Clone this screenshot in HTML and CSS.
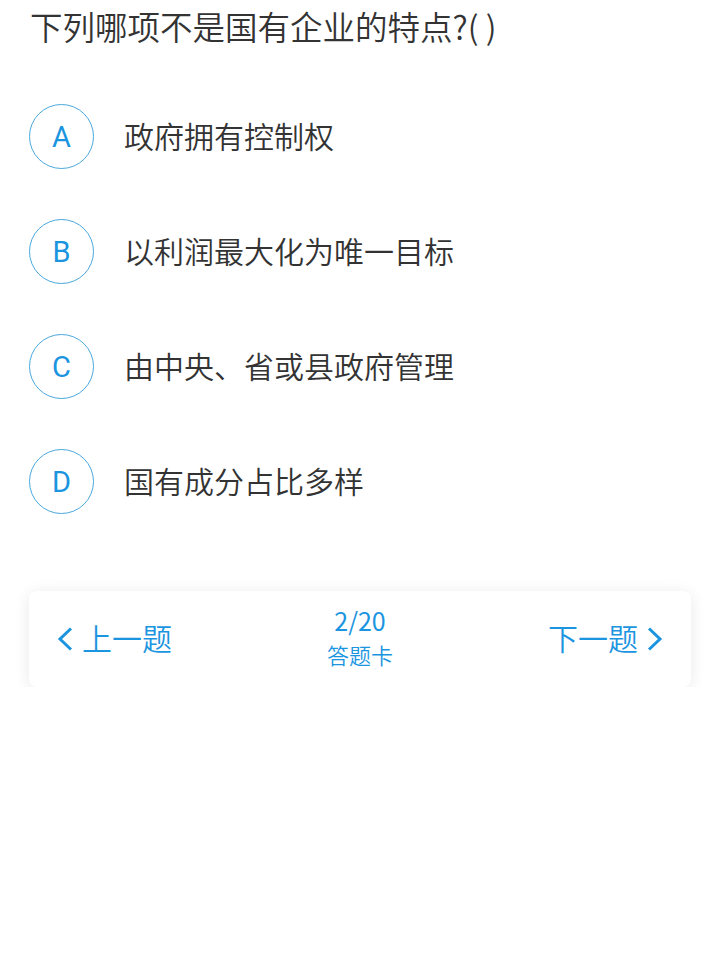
FILE: index.html
```html
<!DOCTYPE html>
<html lang="zh-CN">
<head>
    <meta charset="UTF-8">
    <meta name="viewport" content="width=device-width, initial-scale=1.0">
    <title>答题</title>
    <link rel="stylesheet" href="styles.css">
</head>
<body>
    <div class="question">下列哪项不是国有企业的特点?( )</div>

    <div class="options">
        <div class="option">
            <span class="letter">A</span>
            <span class="label">政府拥有控制权</span>
        </div>
        <div class="option">
            <span class="letter">B</span>
            <span class="label">以利润最大化为唯一目标</span>
        </div>
        <div class="option">
            <span class="letter">C</span>
            <span class="label">由中央、省或县政府管理</span>
        </div>
        <div class="option">
            <span class="letter">D</span>
            <span class="label">国有成分占比多样</span>
        </div>
    </div>

    <div class="pager">
        <div class="prev">
            <svg width="16" height="24" viewBox="0 0 16 24"><path d="M14 1.5 L3 12 L14 22.5" fill="none" stroke="#1b95e0" stroke-width="3"/></svg>
            <span>上一题</span>
        </div>
        <div class="middle">
            <span class="count">2/20</span>
            <span class="card">答题卡</span>
        </div>
        <div class="next">
            <span>下一题</span>
            <svg width="16" height="24" viewBox="0 0 16 24"><path d="M2 1.5 L13 12 L2 22.5" fill="none" stroke="#1b95e0" stroke-width="3"/></svg>
        </div>
    </div>
</body>
</html>
```

FILE: styles.css
```css
body {
    margin: 0;
    background: #fff;
    font-family: "Noto Sans CJK SC", "Noto Sans", sans-serif;
    color: #333;
}

.question {
    padding: 2px 30px 0;
    font-size: 32.5px;
    font-weight: 350;
    line-height: 48px;
}

.options {
    display: flex;
    flex-direction: column;
    gap: 50px;
    padding: 54px 29px 0;
}

.option {
    display: flex;
    align-items: center;
    gap: 30px;
}

.letter {
    width: 63px;
    height: 63px;
    border: 1px solid #4aa8dc;
    border-radius: 50%;
    display: flex;
    align-items: center;
    justify-content: center;
    color: #1b95e0;
    font-size: 29px;
    font-family: "Roboto", "Noto Sans", sans-serif;
}

.label {
    font-size: 30px;
    font-weight: 350;
    margin-top: -4px;
}

.pager {
    margin: 77px 29px 0;
    height: 96px;
    border-radius: 8px;
    background: #fff;
    box-shadow: 0 2px 16px rgba(0, 0, 0, 0.09);
    display: flex;
    align-items: center;
    justify-content: space-between;
    padding: 0 28px;
    color: #1b95e0;
}

.prev, .next {
    display: flex;
    align-items: center;
    gap: 9px;
    font-size: 30px;
    font-weight: 350;
    width: 140px;
}

.next {
    justify-content: flex-end;
}

.prev span, .next span {
    margin-top: -4px;
}

.middle {
    display: flex;
    flex-direction: column;
    align-items: center;
    gap: 4px;
    margin-top: -4px;
}

.count {
    font-size: 25px;
    line-height: 30px;
}

.card {
    font-size: 22px;
    font-weight: 350;
    line-height: 30px;
}
```
